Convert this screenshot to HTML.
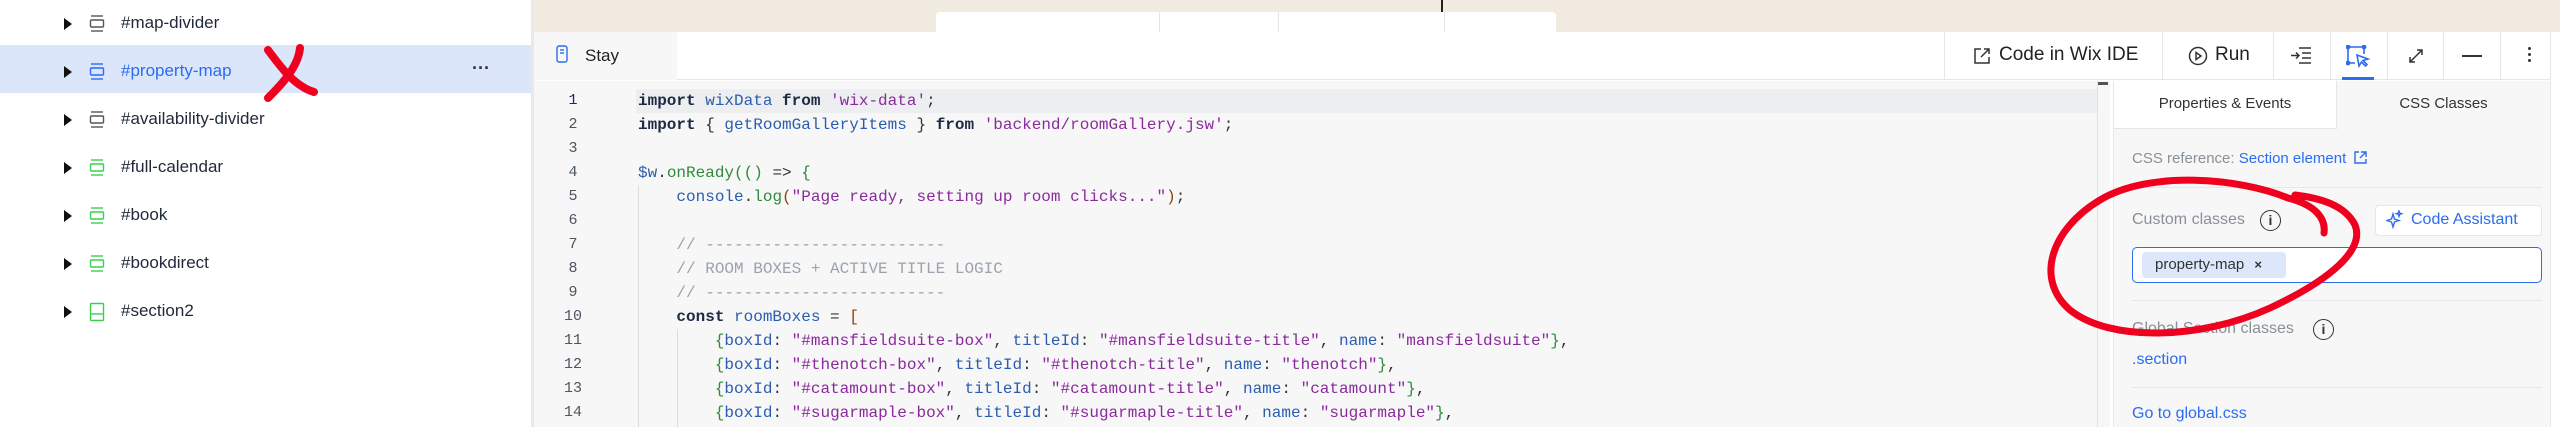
<!DOCTYPE html>
<html><head><meta charset="utf-8"><style>
*{box-sizing:border-box;margin:0;padding:0}
body{width:2560px;height:427px;overflow:hidden;background:#fff;font-family:"Liberation Sans",sans-serif;position:relative}
.abs{position:absolute}
.row{position:absolute;left:0;width:531px;height:48px;font-size:17px;color:#1f2937}
.row .tri{position:absolute;left:64px;top:18px;width:0;height:0;border-left:8px solid #111;border-top:6px solid transparent;border-bottom:6px solid transparent}
.row .ic{position:absolute;left:89px;top:14px}
.row .tx{position:absolute;left:121px;top:13px}
.code{position:absolute;left:638px;font-family:"Liberation Mono",monospace;font-size:16px;white-space:pre;color:#2a5db0;line-height:24px}
.ln{position:absolute;left:553px;width:40px;text-align:center;font-family:"Liberation Mono",monospace;font-size:15px;color:#4b5563;line-height:24px}
.k{color:#1e2a44;font-weight:bold}.s{color:#8a2a9c}.c{color:#9aa3ad}.g{color:#2e8b3a}.p{color:#333}.b{color:#8b4513}
.sep{position:absolute;top:32px;width:1px;height:48px;background:#e3e6ea}
</style></head><body>
<div class="abs" style="left:0;top:0;width:531px;height:427px;background:#fff"></div>
<div class="abs" style="left:0;top:45px;width:531px;height:48px;background:#dbe6fb"></div>
<div class="abs" style="left:531px;top:0;width:3px;height:427px;background:#e9e9e9"></div>

<div class="row" style="top:0"><div class="tri"></div><svg class="ic" width="16" height="20" viewBox="0 0 16 20" fill="none" stroke="#555" stroke-width="1.4"><line x1="2" y1="2" x2="14" y2="2"/><rect x="1.5" y="6" width="13" height="7" rx="1"/><line x1="2" y1="17" x2="14" y2="17"/></svg><div class="tx">#map-divider</div></div>
<div class="row" style="top:48px"><div class="tri"></div><svg class="ic" width="16" height="20" viewBox="0 0 16 20" fill="none" stroke="#2b6cf0" stroke-width="1.4"><line x1="2" y1="2" x2="14" y2="2"/><rect x="1.5" y="6" width="13" height="7" rx="1"/><line x1="2" y1="17" x2="14" y2="17"/></svg><div class="tx" style="color:#2b6cf0">#property-map</div><div class="abs" style="left:472px;top:10px;font-size:18px;color:#333;font-weight:bold">···</div></div>
<div class="row" style="top:96px"><div class="tri"></div><svg class="ic" width="16" height="20" viewBox="0 0 16 20" fill="none" stroke="#555" stroke-width="1.4"><line x1="2" y1="2" x2="14" y2="2"/><rect x="1.5" y="6" width="13" height="7" rx="1"/><line x1="2" y1="17" x2="14" y2="17"/></svg><div class="tx">#availability-divider</div></div>
<div class="row" style="top:144px"><div class="tri"></div><svg class="ic" width="16" height="20" viewBox="0 0 16 20" fill="none" stroke="#3ccf4e" stroke-width="1.4"><line x1="2" y1="2" x2="14" y2="2"/><rect x="1.5" y="6" width="13" height="7" rx="1"/><line x1="2" y1="17" x2="14" y2="17"/></svg><div class="tx">#full-calendar</div></div>
<div class="row" style="top:192px"><div class="tri"></div><svg class="ic" width="16" height="20" viewBox="0 0 16 20" fill="none" stroke="#3ccf4e" stroke-width="1.4"><line x1="2" y1="2" x2="14" y2="2"/><rect x="1.5" y="6" width="13" height="7" rx="1"/><line x1="2" y1="17" x2="14" y2="17"/></svg><div class="tx">#book</div></div>
<div class="row" style="top:240px"><div class="tri"></div><svg class="ic" width="16" height="20" viewBox="0 0 16 20" fill="none" stroke="#3ccf4e" stroke-width="1.4"><line x1="2" y1="2" x2="14" y2="2"/><rect x="1.5" y="6" width="13" height="7" rx="1"/><line x1="2" y1="17" x2="14" y2="17"/></svg><div class="tx">#bookdirect</div></div>
<div class="row" style="top:288px"><div class="tri"></div><svg class="ic" width="16" height="20" viewBox="0 0 16 20" fill="none" stroke="#3ccf4e" stroke-width="1.4"><rect x="1.5" y="1.5" width="13" height="17" rx="1"/><line x1="2" y1="12" x2="14" y2="12"/></svg><div class="tx">#section2</div></div>

<svg class="abs" style="left:258px;top:42px" width="66" height="62" viewBox="0 0 66 62" fill="none" stroke="#f0001f" stroke-width="8" stroke-linecap="round"><path d="M10 8 C22 24 36 44 56 50"/><path d="M42 6 C40 26 22 44 10 56"/></svg>

<div class="abs" style="left:534px;top:0;width:2026px;height:32px;background:#f1ebe1"></div>
<div class="abs" style="left:936px;top:12px;width:620px;height:20px;background:#fff;border-radius:4px 4px 0 0"></div>
<div class="abs" style="left:1159px;top:12px;width:1px;height:20px;background:#e5e5e5"></div>
<div class="abs" style="left:1278px;top:12px;width:1px;height:20px;background:#e5e5e5"></div>
<div class="abs" style="left:1444px;top:12px;width:1px;height:20px;background:#e5e5e5"></div>
<div class="abs" style="left:1441px;top:0;width:1.5px;height:12px;background:#222"></div>

<div class="abs" style="left:534px;top:32px;width:2016px;height:48px;background:#fff;border-bottom:1px solid #e3e6ea"></div>
<div class="abs" style="left:534px;top:32px;width:143px;height:48px;background:#f7f7f7;border-bottom:1px solid #f7f7f7"></div>
<svg class="abs" style="left:556px;top:45px" width="12" height="18" viewBox="0 0 12 18" fill="none" stroke="#2b6cf0" stroke-width="1.4"><rect x="1" y="1" width="10" height="16" rx="2"/><line x1="4" y1="5" x2="8" y2="5"/><line x1="4" y1="8" x2="8" y2="8"/></svg>
<div class="abs" style="left:585px;top:46px;font-size:17px;color:#222">Stay</div>
<div class="sep" style="left:1944px"></div><div class="sep" style="left:2162px"></div><div class="sep" style="left:2273px"></div><div class="sep" style="left:2330px"></div><div class="sep" style="left:2387px"></div><div class="sep" style="left:2443px"></div><div class="sep" style="left:2500px"></div>
<svg class="abs" style="left:1972px;top:46px" width="20" height="20" viewBox="0 0 20 20" fill="none" stroke="#333" stroke-width="1.5"><path d="M9 3H3v14h14v-6"/><path d="M12 3h5v5M17 3l-8 8"/></svg>
<div class="abs" style="left:1999px;top:44px;font-size:19px;color:#222">Code in Wix IDE</div>
<svg class="abs" style="left:2188px;top:46px" width="20" height="20" viewBox="0 0 20 20" fill="none" stroke="#333" stroke-width="1.5"><circle cx="10" cy="10" r="8.5"/><path d="M8 6.5v7l5-3.5z"/></svg>
<div class="abs" style="left:2215px;top:44px;font-size:19px;color:#222">Run</div>
<svg class="abs" style="left:2290px;top:46px" width="22" height="20" viewBox="0 0 22 20" fill="none" stroke="#333" stroke-width="1.5"><path d="M9 2h12M12 7h9M12 12h9M9 17h12M1 9.5h8M6 6.5l3 3-3 3"/></svg>
<svg class="abs" style="left:2346px;top:45px" width="24" height="24" viewBox="0 0 24 24" fill="none" stroke="#2b6cf0" stroke-width="1.6"><path d="M2 2h16M2 2v16M2 18h7M18 2v7"/><circle cx="2" cy="2" r="1.6" fill="#2b6cf0"/><circle cx="18" cy="2" r="1.6" fill="#2b6cf0"/><circle cx="2" cy="18" r="1.6" fill="#2b6cf0"/><path d="M11 10l11 4-5 1.5 4 4-1.5 1.5-4-4L13 21z"/></svg>
<div class="abs" style="left:2342px;top:77px;width:32px;height:3px;background:#2b6cf0"></div>
<svg class="abs" style="left:2407px;top:47px" width="18" height="18" viewBox="0 0 18 18" fill="none" stroke="#333" stroke-width="1.5"><path d="M3 15L15 3M10 3h5v5M3 10v5h5"/></svg>
<div class="abs" style="left:2462px;top:55px;width:20px;height:1.6px;background:#333"></div>
<div class="abs" style="left:2528px;top:47px;width:3px;height:3px;background:#333;border-radius:50%;box-shadow:0 6px 0 #333,0 12px 0 #333"></div>

<div class="abs" style="left:534px;top:81px;width:1576px;height:346px;background:#f7f7f7"></div>
<div class="abs" style="left:636px;top:89px;width:1462px;height:24px;background:#eceef0"></div>
<div class="abs" style="left:638px;top:185px;width:1px;height:242px;background:#dcdcdc"></div>
<div class="abs" style="left:677px;top:329px;width:1px;height:98px;background:#dcdcdc"></div>
<div class="abs" style="left:2097px;top:81px;width:1px;height:346px;background:#e1e1e1"></div>
<div class="abs" style="left:2098px;top:82px;width:10px;height:3px;background:#555"></div>
<div class="abs" style="left:0;top:89px">
<div class="ln" style="top:0;color:#1e2a60">1</div><div class="ln" style="top:24px">2</div><div class="ln" style="top:48px">3</div><div class="ln" style="top:72px">4</div><div class="ln" style="top:96px">5</div><div class="ln" style="top:120px">6</div><div class="ln" style="top:144px">7</div><div class="ln" style="top:168px">8</div><div class="ln" style="top:192px">9</div><div class="ln" style="top:216px">10</div><div class="ln" style="top:240px">11</div><div class="ln" style="top:264px">12</div><div class="ln" style="top:288px">13</div><div class="ln" style="top:312px">14</div>
</div>
<div class="abs" style="left:0;top:89px;width:2097px;height:338px;overflow:hidden">
<div class="code" style="top:0"><span class="k">import</span> wixData <span class="k">from</span> <span class="s">'wix-data'</span><span class="p">;</span>
<span class="k">import</span> <span class="p">{</span> getRoomGalleryItems <span class="p">}</span> <span class="k">from</span> <span class="s">'backend/roomGallery.jsw'</span><span class="p">;</span>

$w<span class="p">.</span><span class="g">onReady</span><span class="g">(()</span> <span class="p">=&gt;</span> <span class="g">{</span>
    console<span class="p">.</span><span class="g">log</span><span class="b">(</span><span class="s">"Page ready, setting up room clicks..."</span><span class="b">)</span><span class="p">;</span>

    <span class="c">// -------------------------</span>
    <span class="c">// ROOM BOXES + ACTIVE TITLE LOGIC</span>
    <span class="c">// -------------------------</span>
    <span class="k">const</span> roomBoxes <span class="p">=</span> <span class="b">[</span>
        <span class="g">{</span>boxId<span class="p">:</span> <span class="s">"#mansfieldsuite-box"</span><span class="p">,</span> titleId<span class="p">:</span> <span class="s">"#mansfieldsuite-title"</span><span class="p">,</span> name<span class="p">:</span> <span class="s">"mansfieldsuite"</span><span class="g">}</span><span class="p">,</span>
        <span class="g">{</span>boxId<span class="p">:</span> <span class="s">"#thenotch-box"</span><span class="p">,</span> titleId<span class="p">:</span> <span class="s">"#thenotch-title"</span><span class="p">,</span> name<span class="p">:</span> <span class="s">"thenotch"</span><span class="g">}</span><span class="p">,</span>
        <span class="g">{</span>boxId<span class="p">:</span> <span class="s">"#catamount-box"</span><span class="p">,</span> titleId<span class="p">:</span> <span class="s">"#catamount-title"</span><span class="p">,</span> name<span class="p">:</span> <span class="s">"catamount"</span><span class="g">}</span><span class="p">,</span>
        <span class="g">{</span>boxId<span class="p">:</span> <span class="s">"#sugarmaple-box"</span><span class="p">,</span> titleId<span class="p">:</span> <span class="s">"#sugarmaple-title"</span><span class="p">,</span> name<span class="p">:</span> <span class="s">"sugarmaple"</span><span class="g">}</span><span class="p">,</span></div>
</div>

<div class="abs" style="left:2113px;top:81px;width:437px;height:346px;background:#f7f7f7;border-left:1px solid #e3e6ea"></div>
<div class="abs" style="left:2113px;top:81px;width:224px;height:48px;background:#fff;border:1px solid #e3e6ea;border-top:none"></div>
<div class="abs" style="left:2113px;top:95px;width:224px;text-align:center;font-size:15px;color:#333">Properties &amp; Events</div>
<div class="abs" style="left:2337px;top:95px;width:213px;text-align:center;font-size:15px;color:#333">CSS Classes</div>
<div class="abs" style="left:2132px;top:150px;font-size:15px;color:#8a9099;white-space:nowrap">CSS reference: <span style="color:#2b6cf0">Section element</span> <svg width="13" height="13" viewBox="0 0 13 13" fill="none" stroke="#2b6cf0" stroke-width="1.4" style="vertical-align:-1px;margin-left:4px"><path d="M5 1H1v11h11V8M7 1h5v5M12 1L6 7"/></svg></div>
<div class="abs" style="left:2132px;top:187px;width:410px;height:1px;background:#e3e6ea"></div>
<div class="abs" style="left:2132px;top:211px;font-size:16px;color:#8a9099">Custom classes</div>
<div class="abs" style="left:2260px;top:210px;width:21px;height:21px;border:1.5px solid #333;border-radius:50%;text-align:center;font-size:14px;line-height:18px;color:#333;font-weight:bold">i</div>
<div class="abs" style="left:2375px;top:205px;width:167px;height:31px;background:#fff;border:1px solid #e3e6ea;border-radius:4px"></div>
<svg class="abs" style="left:2386px;top:210px" width="18" height="20" viewBox="0 0 18 20" fill="none" stroke="#2b6cf0" stroke-width="1.4"><path d="M7 4l1.5 5L13 10.5 8.5 12 7 17 5.5 12 1 10.5 5.5 9z"/><path d="M13 1l.7 2 2 .7-2 .7-.7 2-.7-2-2-.7 2-.7z"/></svg>
<div class="abs" style="left:2411px;top:211px;font-size:16px;color:#2b6cf0">Code Assistant</div>
<div class="abs" style="left:2132px;top:247px;width:410px;height:36px;background:#fff;border:1.5px solid #2b6cf0;border-radius:5px"></div>
<div class="abs" style="left:2142px;top:252px;width:144px;height:26px;background:#dce7fb;border-radius:4px;font-size:15px;color:#333;padding:4px 0 0 13px">property-map <span style="font-size:13px;font-weight:bold;margin-left:6px">×</span></div>
<div class="abs" style="left:2132px;top:300px;width:410px;height:1px;background:#e3e6ea"></div>
<div class="abs" style="left:2132px;top:320px;font-size:16px;color:#8a9099">Global Section classes</div>
<div class="abs" style="left:2313px;top:319px;width:21px;height:21px;border:1.5px solid #333;border-radius:50%;text-align:center;font-size:14px;line-height:18px;color:#333;font-weight:bold">i</div>
<div class="abs" style="left:2132px;top:351px;font-size:16px;color:#2b6cf0">.section</div>
<div class="abs" style="left:2132px;top:387px;width:410px;height:1px;background:#e3e6ea"></div>
<div class="abs" style="left:2132px;top:405px;font-size:16px;color:#2b6cf0">Go to global.css</div>
<div class="abs" style="left:2550px;top:32px;width:10px;height:395px;background:#fff;border-left:1px solid #e3e6ea"></div>

<svg class="abs" style="left:2030px;top:170px" width="340" height="180" viewBox="0 0 340 180" fill="none" stroke="#f0001f" stroke-width="7" stroke-linecap="round"><path d="M294 63 C296 48 285 35 258 28 C210 8 120 0 70 30 C20 60 5 110 40 140 C80 172 170 170 240 138 C300 110 335 80 325 55 C315 35 290 28 265 25"/></svg>
</body></html>
